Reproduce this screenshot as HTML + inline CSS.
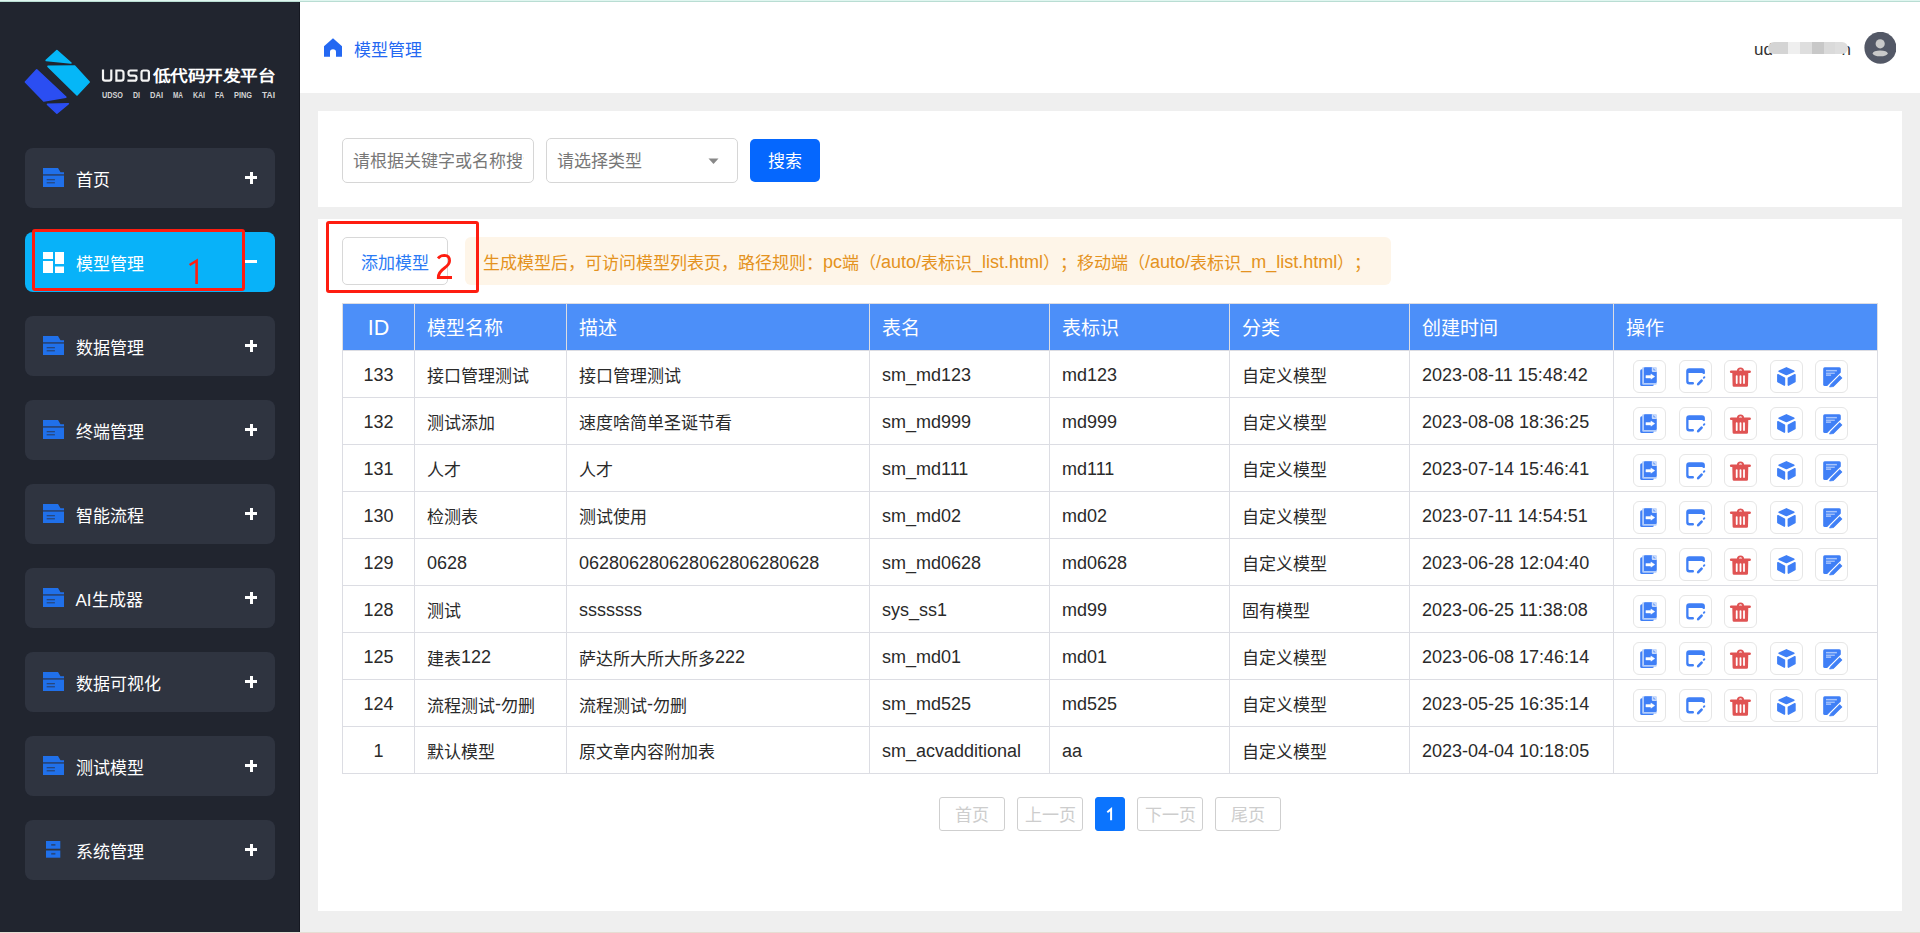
<!DOCTYPE html>
<html lang="zh-CN"><head><meta charset="utf-8">
<style>
*{box-sizing:border-box;margin:0;padding:0}
html,body{width:1920px;height:933px;overflow:hidden;background:#efefef;font-family:"Liberation Sans",sans-serif;position:relative;text-spacing-trim:space-all}
.abs{position:absolute}
#topline{left:0;top:0;width:1920px;height:2px;background:linear-gradient(#e0f6f0 0,#e0f6f0 1px,#b9ddd3 1px)}
#botline{left:0;top:932px;width:1920px;height:1px;background:#e6ddd3}
#side{left:0;top:2px;width:300px;height:930px;background:#21252f;border-right:1px solid #151821}
.mi{position:absolute;left:25px;width:250px;height:60px;border-radius:8px;background:#2f3440;color:#fff;font-size:17px}
.mi .t{position:absolute;left:50.5px;top:23px;line-height:20px;white-space:nowrap}
.mi .plus{position:absolute;left:220px;top:28px;width:12px;height:3px;background:#fff}
.mi .plus.v::after{content:"";position:absolute;left:4.5px;top:-4.5px;width:3px;height:12px;background:#fff}
.mi.act{background:#08b2f9}
.fold{position:absolute;left:18px;top:20px}
#header{left:300px;top:2px;width:1620px;height:91px;background:#fff}
.panel{position:absolute;background:#fff}
.inp{position:absolute;border:1px solid #d6d6d6;border-radius:5px;background:#fff;height:45px;font-size:17px;color:#777;white-space:nowrap;overflow:hidden}
table{border-collapse:collapse;position:absolute;left:342px;top:303px;table-layout:fixed;font-size:17px;color:#222}
td,th{border:1px solid #dcdde2;padding:0 0 0 13px;text-align:left;font-weight:normal;white-space:nowrap;overflow:hidden}
th{background:#4b8df8;color:#fff;height:47px;font-size:19px;border-color:#4b8df8;border-left-color:#d6e2f5;border-right-color:#d6e2f5}
td{height:47px}
td.c,th.c{text-align:center;padding:0}
.ops{position:relative}
.ib{position:absolute;width:33px;height:33px;border:1px solid #e6e6e6;border-radius:6px;background:#fff}
.ib svg{position:absolute;left:-1px;top:-1px}
.pg{position:absolute;top:797px;height:34px;border:1px solid #cfcfcf;border-radius:3px;color:#cdcdcd;font-size:17px;text-align:center;line-height:35px}
.red{position:absolute;border:3px solid #fe1d10;border-radius:3px}
.ann{position:absolute;color:#fe1d10;font-size:34px;line-height:34px}
</style></head>
<body>
<div id="topline" class="abs"></div>
<div id="side" class="abs"></div>
<svg class="abs" style="left:0;top:0" width="300" height="130" viewBox="0 0 300 130">
<g stroke-linejoin="round" stroke-width="1.6">
<path d="M56.9 50.6L46.2 60.4L71 63Z" fill="#05b7f7" stroke="#05b7f7"/>
<path d="M48 66.4L74.6 66L89.2 82L77 95Z" fill="#05b7f7" stroke="#05b7f7"/>
<path d="M36.7 69.9L25.4 82L43.8 101L65.8 97.2Z" fill="#2b4ef2" stroke="#2b4ef2"/>
<path d="M47.5 104.4L68.4 103.7L56.9 113.2Z" fill="#2b4ef2" stroke="#2b4ef2"/>
</g>
<g fill="none" stroke="#f4f4f4" stroke-width="2.2"><path d="M103 69.4V78.6Q103 80.7 105.1 80.7H109.2Q111.3 80.7 111.3 78.6V69.4"/><path d="M116.4 70.5H121Q123.5 70.5 123.5 73V78.2Q123.5 80.7 121 80.7H116.4Z"/><path d="M137.6 70.5H130.5Q128.5 70.5 128.5 72.5V73.6Q128.5 75.6 130.5 75.6H134.5Q136.5 75.6 136.5 77.6V78.7Q136.5 80.7 134.5 80.7H127.4"/><rect x="141.5" y="70.5" width="7.4" height="10.2" rx="2"/></g>
<text x="153" y="81.4" textLength="122" lengthAdjust="spacingAndGlyphs" font-family="Liberation Sans" font-weight="bold" font-size="15.2" fill="#fff">低代码开发平台</text>
<g font-family="Liberation Sans" font-weight="bold" font-size="8.2" fill="#d4d4d4">
<text x="102" y="97.6" textLength="21" lengthAdjust="spacingAndGlyphs">UDSO</text>
<text x="133" y="97.6" textLength="7" lengthAdjust="spacingAndGlyphs">DI</text>
<text x="150" y="97.6" textLength="13" lengthAdjust="spacingAndGlyphs">DAI</text>
<text x="173" y="97.6" textLength="10" lengthAdjust="spacingAndGlyphs">MA</text>
<text x="193" y="97.6" textLength="12" lengthAdjust="spacingAndGlyphs">KAI</text>
<text x="215" y="97.6" textLength="9" lengthAdjust="spacingAndGlyphs">FA</text>
<text x="234" y="97.6" textLength="18" lengthAdjust="spacingAndGlyphs">PING</text>
<text x="262" y="97.6" textLength="13" lengthAdjust="spacingAndGlyphs">TAI</text>
</g></svg>
<div class="mi" style="top:148px"><svg class="fold" width="21" height="19" viewBox="0 0 21 19"><path d="M0 0H15L17.5 4.3H21V19H0Z" fill="#2070ea"/><rect x="0" y="6" width="21" height="1.8" fill="#27477f"/><rect x="3.7" y="11" width="8.2" height="1.3" fill="#27477f"/><rect x="3.7" y="14.1" width="8.2" height="1.3" fill="#27477f"/></svg><div class="t">首页</div><div class="plus v"></div></div>
<div class="mi act" style="top:232px"><svg class="fold" style="top:20px" width="21" height="21" viewBox="0 0 21 21"><rect x="0" y="0" width="10" height="7" fill="#fff"/><rect x="0" y="9" width="10" height="12" fill="#fff"/><rect x="12" y="0" width="9" height="12" fill="#fff"/><rect x="12" y="14.5" width="9" height="6.5" fill="#fff"/></svg><div class="t">模型管理</div><div class="plus"></div></div>
<div class="mi" style="top:316px"><svg class="fold" width="21" height="19" viewBox="0 0 21 19"><path d="M0 0H15L17.5 4.3H21V19H0Z" fill="#2070ea"/><rect x="0" y="6" width="21" height="1.8" fill="#27477f"/><rect x="3.7" y="11" width="8.2" height="1.3" fill="#27477f"/><rect x="3.7" y="14.1" width="8.2" height="1.3" fill="#27477f"/></svg><div class="t">数据管理</div><div class="plus v"></div></div>
<div class="mi" style="top:400px"><svg class="fold" width="21" height="19" viewBox="0 0 21 19"><path d="M0 0H15L17.5 4.3H21V19H0Z" fill="#2070ea"/><rect x="0" y="6" width="21" height="1.8" fill="#27477f"/><rect x="3.7" y="11" width="8.2" height="1.3" fill="#27477f"/><rect x="3.7" y="14.1" width="8.2" height="1.3" fill="#27477f"/></svg><div class="t">终端管理</div><div class="plus v"></div></div>
<div class="mi" style="top:484px"><svg class="fold" width="21" height="19" viewBox="0 0 21 19"><path d="M0 0H15L17.5 4.3H21V19H0Z" fill="#2070ea"/><rect x="0" y="6" width="21" height="1.8" fill="#27477f"/><rect x="3.7" y="11" width="8.2" height="1.3" fill="#27477f"/><rect x="3.7" y="14.1" width="8.2" height="1.3" fill="#27477f"/></svg><div class="t">智能流程</div><div class="plus v"></div></div>
<div class="mi" style="top:568px"><svg class="fold" width="21" height="19" viewBox="0 0 21 19"><path d="M0 0H15L17.5 4.3H21V19H0Z" fill="#2070ea"/><rect x="0" y="6" width="21" height="1.8" fill="#27477f"/><rect x="3.7" y="11" width="8.2" height="1.3" fill="#27477f"/><rect x="3.7" y="14.1" width="8.2" height="1.3" fill="#27477f"/></svg><div class="t">AI生成器</div><div class="plus v"></div></div>
<div class="mi" style="top:652px"><svg class="fold" width="21" height="19" viewBox="0 0 21 19"><path d="M0 0H15L17.5 4.3H21V19H0Z" fill="#2070ea"/><rect x="0" y="6" width="21" height="1.8" fill="#27477f"/><rect x="3.7" y="11" width="8.2" height="1.3" fill="#27477f"/><rect x="3.7" y="14.1" width="8.2" height="1.3" fill="#27477f"/></svg><div class="t">数据可视化</div><div class="plus v"></div></div>
<div class="mi" style="top:736px"><svg class="fold" width="21" height="19" viewBox="0 0 21 19"><path d="M0 0H15L17.5 4.3H21V19H0Z" fill="#2070ea"/><rect x="0" y="6" width="21" height="1.8" fill="#27477f"/><rect x="3.7" y="11" width="8.2" height="1.3" fill="#27477f"/><rect x="3.7" y="14.1" width="8.2" height="1.3" fill="#27477f"/></svg><div class="t">测试模型</div><div class="plus v"></div></div>
<div class="mi" style="top:820px"><svg class="fold" style="left:21px;top:21.3px" width="15" height="17" viewBox="0 0 15 17"><rect x="0" y="0" width="14.3" height="7.7" fill="#2070ea"/><rect x="0" y="9.5" width="14.3" height="7.2" fill="#2070ea"/><rect x="5.2" y="3" width="4.2" height="1.7" fill="#27477f"/><rect x="5.2" y="11.9" width="4.2" height="1.7" fill="#27477f"/></svg><div class="t">系统管理</div><div class="plus v"></div></div>
<div id="header" class="abs"></div>
<div id="botline" class="abs"></div>









<!--MAIN-->
<svg class="abs" style="left:324px;top:38px" width="18" height="19" viewBox="0 0 18 19"><path d="M9 0.3L18 8.3V18.8H12V14Q12 11.2 9 11.2Q6 11.2 6 14V18.8H0V8.3Z" fill="#2468f2"/></svg>
<div class="abs" style="left:354px;top:40px;font-size:17px;line-height:22px;color:#2468f2">模型管理</div>
<div class="abs" style="left:1754px;top:39px;font-size:17px;line-height:22px;color:#333">ud</div>
<div class="abs" style="left:1839px;top:39px;font-size:17px;line-height:22px;color:#333;width:12px;overflow:hidden;text-align:right">n</div>
<div class="abs" style="left:1768px;top:42px;width:80px;height:12px;border-radius:6px;overflow:hidden;background:linear-gradient(90deg,#d4d4d4 0 20px,#efefef 20px 32px,#dedede 32px 44px,#c8c8c8 44px 56px,#dadada 56px 67px,#dedede 67px)"></div>
<svg class="abs" style="left:1864px;top:32px" width="32" height="32" viewBox="0 0 32 32"><circle cx="16.4" cy="15.8" r="16" fill="#535866"/><circle cx="16.2" cy="11.8" r="4.6" fill="#c9c9c9"/><ellipse cx="16.2" cy="21.4" rx="7.5" ry="2.9" fill="#c9c9c9"/></svg>

<div class="panel" style="left:318px;top:111px;width:1584px;height:96px"></div>
<div class="panel" style="left:318px;top:219px;width:1584px;height:692px"></div>
<div class="inp" style="left:342px;top:138px;width:192px"><div style="position:absolute;left:10px;top:12px;line-height:22px;width:171px;overflow:hidden">请根据关键字或名称搜索</div></div>
<div class="inp" style="left:546px;top:138px;width:192px"><div style="position:absolute;left:10px;top:12px;line-height:22px">请选择类型</div><svg style="position:absolute;left:161px;top:19px" width="12" height="7" viewBox="0 0 12 7"><path d="M0.5 0.5H10.5L5.5 6Z" fill="#888"/></svg></div>
<div class="abs" style="left:750px;top:139px;width:70px;height:43px;background:#0567fe;border-radius:5px;color:#fff;font-size:17px;line-height:45px;text-align:center">搜索</div>
<div class="abs" style="left:342px;top:237px;width:106px;height:48px;border:1px solid #d8d8d8;border-radius:5px;background:#fff;color:#2a7bf5;font-size:17px;line-height:52px;padding-left:18px">添加模型</div>
<div class="abs" style="left:465px;top:237px;width:926px;height:48px;background:#fef5e8;border-radius:6px;color:#e49220;font-size:17px;line-height:52px;padding-left:18px;white-space:nowrap">生成模型后，可访问模型列表页，路径规则：<span style="font-size:18px;position:relative;top:-1px">pc</span>端（<span style="font-size:18px;position:relative;top:-1px">/auto/</span>表标识<span style="font-size:18px;position:relative;top:-1px">_list.html</span>）；移动端（<span style="font-size:18px;position:relative;top:-1px">/auto/</span>表标识<span style="font-size:18px;position:relative;top:-1px">_m_list.html</span>）；</div>
<div class="abs" style="left:342px;top:303px;width:1536px;height:471px;background:#fff"></div>
<div class="abs" style="left:343px;top:304px;width:1534px;height:46px;background:#4c8ff9"></div>
<div class="abs" style="left:342px;top:303px;width:1px;height:471px;background:#dcdde3"></div>
<div class="abs" style="left:414px;top:303px;width:1px;height:471px;background:#dcdde3"></div>
<div class="abs" style="left:566px;top:303px;width:1px;height:471px;background:#dcdde3"></div>
<div class="abs" style="left:869px;top:303px;width:1px;height:471px;background:#dcdde3"></div>
<div class="abs" style="left:1049px;top:303px;width:1px;height:471px;background:#dcdde3"></div>
<div class="abs" style="left:1229px;top:303px;width:1px;height:471px;background:#dcdde3"></div>
<div class="abs" style="left:1409px;top:303px;width:1px;height:471px;background:#dcdde3"></div>
<div class="abs" style="left:1613px;top:303px;width:1px;height:471px;background:#dcdde3"></div>
<div class="abs" style="left:1877px;top:303px;width:1px;height:471px;background:#dcdde3"></div>
<div class="abs" style="left:342px;top:303px;width:1536px;height:1px;background:#dcdde3"></div>
<div class="abs" style="left:342px;top:350px;width:1536px;height:1px;background:#dcdde3"></div>
<div class="abs" style="left:342px;top:397px;width:1536px;height:1px;background:#dcdde3"></div>
<div class="abs" style="left:342px;top:444px;width:1536px;height:1px;background:#dcdde3"></div>
<div class="abs" style="left:342px;top:491px;width:1536px;height:1px;background:#dcdde3"></div>
<div class="abs" style="left:342px;top:538px;width:1536px;height:1px;background:#dcdde3"></div>
<div class="abs" style="left:342px;top:585px;width:1536px;height:1px;background:#dcdde3"></div>
<div class="abs" style="left:342px;top:632px;width:1536px;height:1px;background:#dcdde3"></div>
<div class="abs" style="left:342px;top:679px;width:1536px;height:1px;background:#dcdde3"></div>
<div class="abs" style="left:342px;top:726px;width:1536px;height:1px;background:#dcdde3"></div>
<div class="abs" style="left:342px;top:773px;width:1536px;height:1px;background:#dcdde3"></div>
<div class="abs th" style="left:342px;top:306px;width:73px;height:46px;line-height:46px;text-align:center;font-size:19px;color:#fff;white-space:nowrap"><span style="font-size:21.5px;position:relative;top:-1px">ID</span></div>
<div class="abs th" style="left:427px;top:306px;height:46px;line-height:46px;font-size:19px;color:#fff;white-space:nowrap">模型名称</div>
<div class="abs th" style="left:579px;top:306px;height:46px;line-height:46px;font-size:19px;color:#fff;white-space:nowrap">描述</div>
<div class="abs th" style="left:882px;top:306px;height:46px;line-height:46px;font-size:19px;color:#fff;white-space:nowrap">表名</div>
<div class="abs th" style="left:1062px;top:306px;height:46px;line-height:46px;font-size:19px;color:#fff;white-space:nowrap">表标识</div>
<div class="abs th" style="left:1242px;top:306px;height:46px;line-height:46px;font-size:19px;color:#fff;white-space:nowrap">分类</div>
<div class="abs th" style="left:1422px;top:306px;height:46px;line-height:46px;font-size:19px;color:#fff;white-space:nowrap">创建时间</div>
<div class="abs th" style="left:1626px;top:306px;height:46px;line-height:46px;font-size:19px;color:#fff;white-space:nowrap">操作</div>
<div class="abs td" style="left:342px;top:354px;width:73px;height:46px;line-height:46px;text-align:center;font-size:17px;color:#2a2a2a;white-space:nowrap"><span style="font-size:18px;position:relative;top:-2px">133</span></div>
<div class="abs td" style="left:427px;top:354px;height:46px;line-height:46px;font-size:17px;color:#2a2a2a;white-space:nowrap">接口管理测试</div>
<div class="abs td" style="left:579px;top:354px;height:46px;line-height:46px;font-size:17px;color:#2a2a2a;white-space:nowrap">接口管理测试</div>
<div class="abs td" style="left:882px;top:354px;height:46px;line-height:46px;font-size:17px;color:#2a2a2a;white-space:nowrap"><span style="font-size:18px;position:relative;top:-2px">sm_md123</span></div>
<div class="abs td" style="left:1062px;top:354px;height:46px;line-height:46px;font-size:17px;color:#2a2a2a;white-space:nowrap"><span style="font-size:18px;position:relative;top:-2px">md123</span></div>
<div class="abs td" style="left:1242px;top:354px;height:46px;line-height:46px;font-size:17px;color:#2a2a2a;white-space:nowrap">自定义模型</div>
<div class="abs td" style="left:1422px;top:354px;height:46px;line-height:46px;font-size:17px;color:#2a2a2a;white-space:nowrap"><span style="font-size:18px;position:relative;top:-2px">2023-08-11 15:48:42</span></div>
<div class="ib" style="left:1633px;top:360px"><svg width="32" height="32" viewBox="0 0 32 32"><rect x="7.2" y="9.2" width="13.6" height="16.7" rx="1.5" fill="#3f7ff6"/><rect x="9.2" y="7.2" width="14.5" height="17.5" rx="1" fill="#b3cdfb"/><path d="M12 7.2H18.8L23.7 12V21.8Q23.7 23 22.5 23H11V8.2Q11 7.2 12 7.2Z" fill="#3f7ff6"/><path d="M18.8 7.2H22.7Q23.7 7.2 23.7 8.2V12H19.8Q18.8 12 18.8 11Z" fill="#c9dbfc"/><path d="M20.2 8L22.9 10.6H21.2Q20.2 10.6 20.2 9.6Z" fill="#6f9ff8"/><path d="M12.9 15.5H17.9V14L21.8 16.6L17.9 19.2V18H12.9Z" fill="#fff" stroke="#fff" stroke-width=".4" stroke-linejoin="round"/></svg></div>
<div class="ib" style="left:1679px;top:360px"><svg width="32" height="32" viewBox="0 0 32 32"><path d="M10.2 8.2H22.9Q25.9 8.2 25.9 11.2V13.3Q25.9 14 25.2 14H24.4Q23.6 13 22.6 13H9.5V21Q9.5 22.1 10.6 22.1H13.8Q15 22.1 15 23.35Q15 24.6 13.8 24.6H10.2Q7.2 24.6 7.2 21.6V11.2Q7.2 8.2 10.2 8.2Z" fill="#3f7ff6"/><path d="M19.2 24.2L22.6 20.6" stroke="#3f7ff6" stroke-width="2.6" stroke-linecap="round"/><path d="M24.8 17.8L25.4 17.2" stroke="#3f7ff6" stroke-width="1.9" stroke-linecap="round"/></svg></div>
<div class="ib" style="left:1724px;top:360px"><svg width="32" height="32" viewBox="0 0 32 32"><g transform="translate(0.3 0.4)"><path d="M12.6 10.6A3.6 3.6 0 0 1 19.8 10.6H17.9A1.7 1.7 0 0 0 14.5 10.6Z" fill="#e05353"/><rect x="5.6" y="10.2" width="21" height="2.5" rx="1.25" fill="#e05353"/><path d="M8 12.5H24L23.7 25Q23.7 26.4 22.3 26.4H9.7Q8.3 26.4 8.3 25Z" fill="#e05353"/><g fill="#fff"><rect x="11.5" y="14.8" width="1.8" height="8.7" rx=".9"/><rect x="15.3" y="14.8" width="1.8" height="8.7" rx=".9"/><rect x="18.8" y="14.8" width="1.8" height="8.7" rx=".9"/></g></g></svg></div>
<div class="ib" style="left:1770px;top:360px"><svg width="32" height="32" viewBox="0 0 32 32"><g transform="translate(0.3 0.4)" fill="#3f7ff6" stroke="#3f7ff6" stroke-width="1.6" stroke-linejoin="round"><path d="M16.1 7.5L8.9 10.9L16.1 14.1L23.5 10.9Z"/><path d="M7.6 14.4L14.1 17.7V24.7L7.6 21.2Z"/><path d="M24.6 14.4L18.1 17.7V24.7L24.6 21.2Z"/></g></svg></div>
<div class="ib" style="left:1815px;top:360px"><svg width="32" height="32" viewBox="0 0 32 32"><path d="M9.7 7.3H24.3Q25.8 7.3 25.8 8.8V12.5L12.2 26.1H9.7Q8.2 26.1 8.2 24.6V8.8Q8.2 7.3 9.7 7.3Z" fill="#3f7ff6"/><path d="M24.7 15.6L27.1 18L18.6 26.5L14.5 27L15.8 24.5Z" fill="#3f7ff6" stroke="#3f7ff6" stroke-width=".7" stroke-linejoin="round"/><g fill="#a9c5fb"><rect x="11" y="9.9" width="10.9" height="1.5"/><rect x="11" y="12.6" width="8.8" height="1.3"/><rect x="11" y="14.4" width="5.1" height="1.5"/></g></svg></div>
<div class="abs td" style="left:342px;top:401px;width:73px;height:46px;line-height:46px;text-align:center;font-size:17px;color:#2a2a2a;white-space:nowrap"><span style="font-size:18px;position:relative;top:-2px">132</span></div>
<div class="abs td" style="left:427px;top:401px;height:46px;line-height:46px;font-size:17px;color:#2a2a2a;white-space:nowrap">测试添加</div>
<div class="abs td" style="left:579px;top:401px;height:46px;line-height:46px;font-size:17px;color:#2a2a2a;white-space:nowrap">速度啥简单圣诞节看</div>
<div class="abs td" style="left:882px;top:401px;height:46px;line-height:46px;font-size:17px;color:#2a2a2a;white-space:nowrap"><span style="font-size:18px;position:relative;top:-2px">sm_md999</span></div>
<div class="abs td" style="left:1062px;top:401px;height:46px;line-height:46px;font-size:17px;color:#2a2a2a;white-space:nowrap"><span style="font-size:18px;position:relative;top:-2px">md999</span></div>
<div class="abs td" style="left:1242px;top:401px;height:46px;line-height:46px;font-size:17px;color:#2a2a2a;white-space:nowrap">自定义模型</div>
<div class="abs td" style="left:1422px;top:401px;height:46px;line-height:46px;font-size:17px;color:#2a2a2a;white-space:nowrap"><span style="font-size:18px;position:relative;top:-2px">2023-08-08 18:36:25</span></div>
<div class="ib" style="left:1633px;top:407px"><svg width="32" height="32" viewBox="0 0 32 32"><rect x="7.2" y="9.2" width="13.6" height="16.7" rx="1.5" fill="#3f7ff6"/><rect x="9.2" y="7.2" width="14.5" height="17.5" rx="1" fill="#b3cdfb"/><path d="M12 7.2H18.8L23.7 12V21.8Q23.7 23 22.5 23H11V8.2Q11 7.2 12 7.2Z" fill="#3f7ff6"/><path d="M18.8 7.2H22.7Q23.7 7.2 23.7 8.2V12H19.8Q18.8 12 18.8 11Z" fill="#c9dbfc"/><path d="M20.2 8L22.9 10.6H21.2Q20.2 10.6 20.2 9.6Z" fill="#6f9ff8"/><path d="M12.9 15.5H17.9V14L21.8 16.6L17.9 19.2V18H12.9Z" fill="#fff" stroke="#fff" stroke-width=".4" stroke-linejoin="round"/></svg></div>
<div class="ib" style="left:1679px;top:407px"><svg width="32" height="32" viewBox="0 0 32 32"><path d="M10.2 8.2H22.9Q25.9 8.2 25.9 11.2V13.3Q25.9 14 25.2 14H24.4Q23.6 13 22.6 13H9.5V21Q9.5 22.1 10.6 22.1H13.8Q15 22.1 15 23.35Q15 24.6 13.8 24.6H10.2Q7.2 24.6 7.2 21.6V11.2Q7.2 8.2 10.2 8.2Z" fill="#3f7ff6"/><path d="M19.2 24.2L22.6 20.6" stroke="#3f7ff6" stroke-width="2.6" stroke-linecap="round"/><path d="M24.8 17.8L25.4 17.2" stroke="#3f7ff6" stroke-width="1.9" stroke-linecap="round"/></svg></div>
<div class="ib" style="left:1724px;top:407px"><svg width="32" height="32" viewBox="0 0 32 32"><g transform="translate(0.3 0.4)"><path d="M12.6 10.6A3.6 3.6 0 0 1 19.8 10.6H17.9A1.7 1.7 0 0 0 14.5 10.6Z" fill="#e05353"/><rect x="5.6" y="10.2" width="21" height="2.5" rx="1.25" fill="#e05353"/><path d="M8 12.5H24L23.7 25Q23.7 26.4 22.3 26.4H9.7Q8.3 26.4 8.3 25Z" fill="#e05353"/><g fill="#fff"><rect x="11.5" y="14.8" width="1.8" height="8.7" rx=".9"/><rect x="15.3" y="14.8" width="1.8" height="8.7" rx=".9"/><rect x="18.8" y="14.8" width="1.8" height="8.7" rx=".9"/></g></g></svg></div>
<div class="ib" style="left:1770px;top:407px"><svg width="32" height="32" viewBox="0 0 32 32"><g transform="translate(0.3 0.4)" fill="#3f7ff6" stroke="#3f7ff6" stroke-width="1.6" stroke-linejoin="round"><path d="M16.1 7.5L8.9 10.9L16.1 14.1L23.5 10.9Z"/><path d="M7.6 14.4L14.1 17.7V24.7L7.6 21.2Z"/><path d="M24.6 14.4L18.1 17.7V24.7L24.6 21.2Z"/></g></svg></div>
<div class="ib" style="left:1815px;top:407px"><svg width="32" height="32" viewBox="0 0 32 32"><path d="M9.7 7.3H24.3Q25.8 7.3 25.8 8.8V12.5L12.2 26.1H9.7Q8.2 26.1 8.2 24.6V8.8Q8.2 7.3 9.7 7.3Z" fill="#3f7ff6"/><path d="M24.7 15.6L27.1 18L18.6 26.5L14.5 27L15.8 24.5Z" fill="#3f7ff6" stroke="#3f7ff6" stroke-width=".7" stroke-linejoin="round"/><g fill="#a9c5fb"><rect x="11" y="9.9" width="10.9" height="1.5"/><rect x="11" y="12.6" width="8.8" height="1.3"/><rect x="11" y="14.4" width="5.1" height="1.5"/></g></svg></div>
<div class="abs td" style="left:342px;top:448px;width:73px;height:46px;line-height:46px;text-align:center;font-size:17px;color:#2a2a2a;white-space:nowrap"><span style="font-size:18px;position:relative;top:-2px">131</span></div>
<div class="abs td" style="left:427px;top:448px;height:46px;line-height:46px;font-size:17px;color:#2a2a2a;white-space:nowrap">人才</div>
<div class="abs td" style="left:579px;top:448px;height:46px;line-height:46px;font-size:17px;color:#2a2a2a;white-space:nowrap">人才</div>
<div class="abs td" style="left:882px;top:448px;height:46px;line-height:46px;font-size:17px;color:#2a2a2a;white-space:nowrap"><span style="font-size:18px;position:relative;top:-2px">sm_md111</span></div>
<div class="abs td" style="left:1062px;top:448px;height:46px;line-height:46px;font-size:17px;color:#2a2a2a;white-space:nowrap"><span style="font-size:18px;position:relative;top:-2px">md111</span></div>
<div class="abs td" style="left:1242px;top:448px;height:46px;line-height:46px;font-size:17px;color:#2a2a2a;white-space:nowrap">自定义模型</div>
<div class="abs td" style="left:1422px;top:448px;height:46px;line-height:46px;font-size:17px;color:#2a2a2a;white-space:nowrap"><span style="font-size:18px;position:relative;top:-2px">2023-07-14 15:46:41</span></div>
<div class="ib" style="left:1633px;top:454px"><svg width="32" height="32" viewBox="0 0 32 32"><rect x="7.2" y="9.2" width="13.6" height="16.7" rx="1.5" fill="#3f7ff6"/><rect x="9.2" y="7.2" width="14.5" height="17.5" rx="1" fill="#b3cdfb"/><path d="M12 7.2H18.8L23.7 12V21.8Q23.7 23 22.5 23H11V8.2Q11 7.2 12 7.2Z" fill="#3f7ff6"/><path d="M18.8 7.2H22.7Q23.7 7.2 23.7 8.2V12H19.8Q18.8 12 18.8 11Z" fill="#c9dbfc"/><path d="M20.2 8L22.9 10.6H21.2Q20.2 10.6 20.2 9.6Z" fill="#6f9ff8"/><path d="M12.9 15.5H17.9V14L21.8 16.6L17.9 19.2V18H12.9Z" fill="#fff" stroke="#fff" stroke-width=".4" stroke-linejoin="round"/></svg></div>
<div class="ib" style="left:1679px;top:454px"><svg width="32" height="32" viewBox="0 0 32 32"><path d="M10.2 8.2H22.9Q25.9 8.2 25.9 11.2V13.3Q25.9 14 25.2 14H24.4Q23.6 13 22.6 13H9.5V21Q9.5 22.1 10.6 22.1H13.8Q15 22.1 15 23.35Q15 24.6 13.8 24.6H10.2Q7.2 24.6 7.2 21.6V11.2Q7.2 8.2 10.2 8.2Z" fill="#3f7ff6"/><path d="M19.2 24.2L22.6 20.6" stroke="#3f7ff6" stroke-width="2.6" stroke-linecap="round"/><path d="M24.8 17.8L25.4 17.2" stroke="#3f7ff6" stroke-width="1.9" stroke-linecap="round"/></svg></div>
<div class="ib" style="left:1724px;top:454px"><svg width="32" height="32" viewBox="0 0 32 32"><g transform="translate(0.3 0.4)"><path d="M12.6 10.6A3.6 3.6 0 0 1 19.8 10.6H17.9A1.7 1.7 0 0 0 14.5 10.6Z" fill="#e05353"/><rect x="5.6" y="10.2" width="21" height="2.5" rx="1.25" fill="#e05353"/><path d="M8 12.5H24L23.7 25Q23.7 26.4 22.3 26.4H9.7Q8.3 26.4 8.3 25Z" fill="#e05353"/><g fill="#fff"><rect x="11.5" y="14.8" width="1.8" height="8.7" rx=".9"/><rect x="15.3" y="14.8" width="1.8" height="8.7" rx=".9"/><rect x="18.8" y="14.8" width="1.8" height="8.7" rx=".9"/></g></g></svg></div>
<div class="ib" style="left:1770px;top:454px"><svg width="32" height="32" viewBox="0 0 32 32"><g transform="translate(0.3 0.4)" fill="#3f7ff6" stroke="#3f7ff6" stroke-width="1.6" stroke-linejoin="round"><path d="M16.1 7.5L8.9 10.9L16.1 14.1L23.5 10.9Z"/><path d="M7.6 14.4L14.1 17.7V24.7L7.6 21.2Z"/><path d="M24.6 14.4L18.1 17.7V24.7L24.6 21.2Z"/></g></svg></div>
<div class="ib" style="left:1815px;top:454px"><svg width="32" height="32" viewBox="0 0 32 32"><path d="M9.7 7.3H24.3Q25.8 7.3 25.8 8.8V12.5L12.2 26.1H9.7Q8.2 26.1 8.2 24.6V8.8Q8.2 7.3 9.7 7.3Z" fill="#3f7ff6"/><path d="M24.7 15.6L27.1 18L18.6 26.5L14.5 27L15.8 24.5Z" fill="#3f7ff6" stroke="#3f7ff6" stroke-width=".7" stroke-linejoin="round"/><g fill="#a9c5fb"><rect x="11" y="9.9" width="10.9" height="1.5"/><rect x="11" y="12.6" width="8.8" height="1.3"/><rect x="11" y="14.4" width="5.1" height="1.5"/></g></svg></div>
<div class="abs td" style="left:342px;top:495px;width:73px;height:46px;line-height:46px;text-align:center;font-size:17px;color:#2a2a2a;white-space:nowrap"><span style="font-size:18px;position:relative;top:-2px">130</span></div>
<div class="abs td" style="left:427px;top:495px;height:46px;line-height:46px;font-size:17px;color:#2a2a2a;white-space:nowrap">检测表</div>
<div class="abs td" style="left:579px;top:495px;height:46px;line-height:46px;font-size:17px;color:#2a2a2a;white-space:nowrap">测试使用</div>
<div class="abs td" style="left:882px;top:495px;height:46px;line-height:46px;font-size:17px;color:#2a2a2a;white-space:nowrap"><span style="font-size:18px;position:relative;top:-2px">sm_md02</span></div>
<div class="abs td" style="left:1062px;top:495px;height:46px;line-height:46px;font-size:17px;color:#2a2a2a;white-space:nowrap"><span style="font-size:18px;position:relative;top:-2px">md02</span></div>
<div class="abs td" style="left:1242px;top:495px;height:46px;line-height:46px;font-size:17px;color:#2a2a2a;white-space:nowrap">自定义模型</div>
<div class="abs td" style="left:1422px;top:495px;height:46px;line-height:46px;font-size:17px;color:#2a2a2a;white-space:nowrap"><span style="font-size:18px;position:relative;top:-2px">2023-07-11 14:54:51</span></div>
<div class="ib" style="left:1633px;top:501px"><svg width="32" height="32" viewBox="0 0 32 32"><rect x="7.2" y="9.2" width="13.6" height="16.7" rx="1.5" fill="#3f7ff6"/><rect x="9.2" y="7.2" width="14.5" height="17.5" rx="1" fill="#b3cdfb"/><path d="M12 7.2H18.8L23.7 12V21.8Q23.7 23 22.5 23H11V8.2Q11 7.2 12 7.2Z" fill="#3f7ff6"/><path d="M18.8 7.2H22.7Q23.7 7.2 23.7 8.2V12H19.8Q18.8 12 18.8 11Z" fill="#c9dbfc"/><path d="M20.2 8L22.9 10.6H21.2Q20.2 10.6 20.2 9.6Z" fill="#6f9ff8"/><path d="M12.9 15.5H17.9V14L21.8 16.6L17.9 19.2V18H12.9Z" fill="#fff" stroke="#fff" stroke-width=".4" stroke-linejoin="round"/></svg></div>
<div class="ib" style="left:1679px;top:501px"><svg width="32" height="32" viewBox="0 0 32 32"><path d="M10.2 8.2H22.9Q25.9 8.2 25.9 11.2V13.3Q25.9 14 25.2 14H24.4Q23.6 13 22.6 13H9.5V21Q9.5 22.1 10.6 22.1H13.8Q15 22.1 15 23.35Q15 24.6 13.8 24.6H10.2Q7.2 24.6 7.2 21.6V11.2Q7.2 8.2 10.2 8.2Z" fill="#3f7ff6"/><path d="M19.2 24.2L22.6 20.6" stroke="#3f7ff6" stroke-width="2.6" stroke-linecap="round"/><path d="M24.8 17.8L25.4 17.2" stroke="#3f7ff6" stroke-width="1.9" stroke-linecap="round"/></svg></div>
<div class="ib" style="left:1724px;top:501px"><svg width="32" height="32" viewBox="0 0 32 32"><g transform="translate(0.3 0.4)"><path d="M12.6 10.6A3.6 3.6 0 0 1 19.8 10.6H17.9A1.7 1.7 0 0 0 14.5 10.6Z" fill="#e05353"/><rect x="5.6" y="10.2" width="21" height="2.5" rx="1.25" fill="#e05353"/><path d="M8 12.5H24L23.7 25Q23.7 26.4 22.3 26.4H9.7Q8.3 26.4 8.3 25Z" fill="#e05353"/><g fill="#fff"><rect x="11.5" y="14.8" width="1.8" height="8.7" rx=".9"/><rect x="15.3" y="14.8" width="1.8" height="8.7" rx=".9"/><rect x="18.8" y="14.8" width="1.8" height="8.7" rx=".9"/></g></g></svg></div>
<div class="ib" style="left:1770px;top:501px"><svg width="32" height="32" viewBox="0 0 32 32"><g transform="translate(0.3 0.4)" fill="#3f7ff6" stroke="#3f7ff6" stroke-width="1.6" stroke-linejoin="round"><path d="M16.1 7.5L8.9 10.9L16.1 14.1L23.5 10.9Z"/><path d="M7.6 14.4L14.1 17.7V24.7L7.6 21.2Z"/><path d="M24.6 14.4L18.1 17.7V24.7L24.6 21.2Z"/></g></svg></div>
<div class="ib" style="left:1815px;top:501px"><svg width="32" height="32" viewBox="0 0 32 32"><path d="M9.7 7.3H24.3Q25.8 7.3 25.8 8.8V12.5L12.2 26.1H9.7Q8.2 26.1 8.2 24.6V8.8Q8.2 7.3 9.7 7.3Z" fill="#3f7ff6"/><path d="M24.7 15.6L27.1 18L18.6 26.5L14.5 27L15.8 24.5Z" fill="#3f7ff6" stroke="#3f7ff6" stroke-width=".7" stroke-linejoin="round"/><g fill="#a9c5fb"><rect x="11" y="9.9" width="10.9" height="1.5"/><rect x="11" y="12.6" width="8.8" height="1.3"/><rect x="11" y="14.4" width="5.1" height="1.5"/></g></svg></div>
<div class="abs td" style="left:342px;top:542px;width:73px;height:46px;line-height:46px;text-align:center;font-size:17px;color:#2a2a2a;white-space:nowrap"><span style="font-size:18px;position:relative;top:-2px">129</span></div>
<div class="abs td" style="left:427px;top:542px;height:46px;line-height:46px;font-size:17px;color:#2a2a2a;white-space:nowrap"><span style="font-size:18px;position:relative;top:-2px">0628</span></div>
<div class="abs td" style="left:579px;top:542px;height:46px;line-height:46px;font-size:17px;color:#2a2a2a;white-space:nowrap"><span style="font-size:18px;position:relative;top:-2px">062806280628062806280628</span></div>
<div class="abs td" style="left:882px;top:542px;height:46px;line-height:46px;font-size:17px;color:#2a2a2a;white-space:nowrap"><span style="font-size:18px;position:relative;top:-2px">sm_md0628</span></div>
<div class="abs td" style="left:1062px;top:542px;height:46px;line-height:46px;font-size:17px;color:#2a2a2a;white-space:nowrap"><span style="font-size:18px;position:relative;top:-2px">md0628</span></div>
<div class="abs td" style="left:1242px;top:542px;height:46px;line-height:46px;font-size:17px;color:#2a2a2a;white-space:nowrap">自定义模型</div>
<div class="abs td" style="left:1422px;top:542px;height:46px;line-height:46px;font-size:17px;color:#2a2a2a;white-space:nowrap"><span style="font-size:18px;position:relative;top:-2px">2023-06-28 12:04:40</span></div>
<div class="ib" style="left:1633px;top:548px"><svg width="32" height="32" viewBox="0 0 32 32"><rect x="7.2" y="9.2" width="13.6" height="16.7" rx="1.5" fill="#3f7ff6"/><rect x="9.2" y="7.2" width="14.5" height="17.5" rx="1" fill="#b3cdfb"/><path d="M12 7.2H18.8L23.7 12V21.8Q23.7 23 22.5 23H11V8.2Q11 7.2 12 7.2Z" fill="#3f7ff6"/><path d="M18.8 7.2H22.7Q23.7 7.2 23.7 8.2V12H19.8Q18.8 12 18.8 11Z" fill="#c9dbfc"/><path d="M20.2 8L22.9 10.6H21.2Q20.2 10.6 20.2 9.6Z" fill="#6f9ff8"/><path d="M12.9 15.5H17.9V14L21.8 16.6L17.9 19.2V18H12.9Z" fill="#fff" stroke="#fff" stroke-width=".4" stroke-linejoin="round"/></svg></div>
<div class="ib" style="left:1679px;top:548px"><svg width="32" height="32" viewBox="0 0 32 32"><path d="M10.2 8.2H22.9Q25.9 8.2 25.9 11.2V13.3Q25.9 14 25.2 14H24.4Q23.6 13 22.6 13H9.5V21Q9.5 22.1 10.6 22.1H13.8Q15 22.1 15 23.35Q15 24.6 13.8 24.6H10.2Q7.2 24.6 7.2 21.6V11.2Q7.2 8.2 10.2 8.2Z" fill="#3f7ff6"/><path d="M19.2 24.2L22.6 20.6" stroke="#3f7ff6" stroke-width="2.6" stroke-linecap="round"/><path d="M24.8 17.8L25.4 17.2" stroke="#3f7ff6" stroke-width="1.9" stroke-linecap="round"/></svg></div>
<div class="ib" style="left:1724px;top:548px"><svg width="32" height="32" viewBox="0 0 32 32"><g transform="translate(0.3 0.4)"><path d="M12.6 10.6A3.6 3.6 0 0 1 19.8 10.6H17.9A1.7 1.7 0 0 0 14.5 10.6Z" fill="#e05353"/><rect x="5.6" y="10.2" width="21" height="2.5" rx="1.25" fill="#e05353"/><path d="M8 12.5H24L23.7 25Q23.7 26.4 22.3 26.4H9.7Q8.3 26.4 8.3 25Z" fill="#e05353"/><g fill="#fff"><rect x="11.5" y="14.8" width="1.8" height="8.7" rx=".9"/><rect x="15.3" y="14.8" width="1.8" height="8.7" rx=".9"/><rect x="18.8" y="14.8" width="1.8" height="8.7" rx=".9"/></g></g></svg></div>
<div class="ib" style="left:1770px;top:548px"><svg width="32" height="32" viewBox="0 0 32 32"><g transform="translate(0.3 0.4)" fill="#3f7ff6" stroke="#3f7ff6" stroke-width="1.6" stroke-linejoin="round"><path d="M16.1 7.5L8.9 10.9L16.1 14.1L23.5 10.9Z"/><path d="M7.6 14.4L14.1 17.7V24.7L7.6 21.2Z"/><path d="M24.6 14.4L18.1 17.7V24.7L24.6 21.2Z"/></g></svg></div>
<div class="ib" style="left:1815px;top:548px"><svg width="32" height="32" viewBox="0 0 32 32"><path d="M9.7 7.3H24.3Q25.8 7.3 25.8 8.8V12.5L12.2 26.1H9.7Q8.2 26.1 8.2 24.6V8.8Q8.2 7.3 9.7 7.3Z" fill="#3f7ff6"/><path d="M24.7 15.6L27.1 18L18.6 26.5L14.5 27L15.8 24.5Z" fill="#3f7ff6" stroke="#3f7ff6" stroke-width=".7" stroke-linejoin="round"/><g fill="#a9c5fb"><rect x="11" y="9.9" width="10.9" height="1.5"/><rect x="11" y="12.6" width="8.8" height="1.3"/><rect x="11" y="14.4" width="5.1" height="1.5"/></g></svg></div>
<div class="abs td" style="left:342px;top:589px;width:73px;height:46px;line-height:46px;text-align:center;font-size:17px;color:#2a2a2a;white-space:nowrap"><span style="font-size:18px;position:relative;top:-2px">128</span></div>
<div class="abs td" style="left:427px;top:589px;height:46px;line-height:46px;font-size:17px;color:#2a2a2a;white-space:nowrap">测试</div>
<div class="abs td" style="left:579px;top:589px;height:46px;line-height:46px;font-size:17px;color:#2a2a2a;white-space:nowrap"><span style="font-size:18px;position:relative;top:-2px">sssssss</span></div>
<div class="abs td" style="left:882px;top:589px;height:46px;line-height:46px;font-size:17px;color:#2a2a2a;white-space:nowrap"><span style="font-size:18px;position:relative;top:-2px">sys_ss1</span></div>
<div class="abs td" style="left:1062px;top:589px;height:46px;line-height:46px;font-size:17px;color:#2a2a2a;white-space:nowrap"><span style="font-size:18px;position:relative;top:-2px">md99</span></div>
<div class="abs td" style="left:1242px;top:589px;height:46px;line-height:46px;font-size:17px;color:#2a2a2a;white-space:nowrap">固有模型</div>
<div class="abs td" style="left:1422px;top:589px;height:46px;line-height:46px;font-size:17px;color:#2a2a2a;white-space:nowrap"><span style="font-size:18px;position:relative;top:-2px">2023-06-25 11:38:08</span></div>
<div class="ib" style="left:1633px;top:595px"><svg width="32" height="32" viewBox="0 0 32 32"><rect x="7.2" y="9.2" width="13.6" height="16.7" rx="1.5" fill="#3f7ff6"/><rect x="9.2" y="7.2" width="14.5" height="17.5" rx="1" fill="#b3cdfb"/><path d="M12 7.2H18.8L23.7 12V21.8Q23.7 23 22.5 23H11V8.2Q11 7.2 12 7.2Z" fill="#3f7ff6"/><path d="M18.8 7.2H22.7Q23.7 7.2 23.7 8.2V12H19.8Q18.8 12 18.8 11Z" fill="#c9dbfc"/><path d="M20.2 8L22.9 10.6H21.2Q20.2 10.6 20.2 9.6Z" fill="#6f9ff8"/><path d="M12.9 15.5H17.9V14L21.8 16.6L17.9 19.2V18H12.9Z" fill="#fff" stroke="#fff" stroke-width=".4" stroke-linejoin="round"/></svg></div>
<div class="ib" style="left:1679px;top:595px"><svg width="32" height="32" viewBox="0 0 32 32"><path d="M10.2 8.2H22.9Q25.9 8.2 25.9 11.2V13.3Q25.9 14 25.2 14H24.4Q23.6 13 22.6 13H9.5V21Q9.5 22.1 10.6 22.1H13.8Q15 22.1 15 23.35Q15 24.6 13.8 24.6H10.2Q7.2 24.6 7.2 21.6V11.2Q7.2 8.2 10.2 8.2Z" fill="#3f7ff6"/><path d="M19.2 24.2L22.6 20.6" stroke="#3f7ff6" stroke-width="2.6" stroke-linecap="round"/><path d="M24.8 17.8L25.4 17.2" stroke="#3f7ff6" stroke-width="1.9" stroke-linecap="round"/></svg></div>
<div class="ib" style="left:1724px;top:595px"><svg width="32" height="32" viewBox="0 0 32 32"><g transform="translate(0.3 0.4)"><path d="M12.6 10.6A3.6 3.6 0 0 1 19.8 10.6H17.9A1.7 1.7 0 0 0 14.5 10.6Z" fill="#e05353"/><rect x="5.6" y="10.2" width="21" height="2.5" rx="1.25" fill="#e05353"/><path d="M8 12.5H24L23.7 25Q23.7 26.4 22.3 26.4H9.7Q8.3 26.4 8.3 25Z" fill="#e05353"/><g fill="#fff"><rect x="11.5" y="14.8" width="1.8" height="8.7" rx=".9"/><rect x="15.3" y="14.8" width="1.8" height="8.7" rx=".9"/><rect x="18.8" y="14.8" width="1.8" height="8.7" rx=".9"/></g></g></svg></div>
<div class="abs td" style="left:342px;top:636px;width:73px;height:46px;line-height:46px;text-align:center;font-size:17px;color:#2a2a2a;white-space:nowrap"><span style="font-size:18px;position:relative;top:-2px">125</span></div>
<div class="abs td" style="left:427px;top:636px;height:46px;line-height:46px;font-size:17px;color:#2a2a2a;white-space:nowrap">建表<span style="font-size:18px;position:relative;top:-2px">122</span></div>
<div class="abs td" style="left:579px;top:636px;height:46px;line-height:46px;font-size:17px;color:#2a2a2a;white-space:nowrap">萨达所大所大所多<span style="font-size:18px;position:relative;top:-2px">222</span></div>
<div class="abs td" style="left:882px;top:636px;height:46px;line-height:46px;font-size:17px;color:#2a2a2a;white-space:nowrap"><span style="font-size:18px;position:relative;top:-2px">sm_md01</span></div>
<div class="abs td" style="left:1062px;top:636px;height:46px;line-height:46px;font-size:17px;color:#2a2a2a;white-space:nowrap"><span style="font-size:18px;position:relative;top:-2px">md01</span></div>
<div class="abs td" style="left:1242px;top:636px;height:46px;line-height:46px;font-size:17px;color:#2a2a2a;white-space:nowrap">自定义模型</div>
<div class="abs td" style="left:1422px;top:636px;height:46px;line-height:46px;font-size:17px;color:#2a2a2a;white-space:nowrap"><span style="font-size:18px;position:relative;top:-2px">2023-06-08 17:46:14</span></div>
<div class="ib" style="left:1633px;top:642px"><svg width="32" height="32" viewBox="0 0 32 32"><rect x="7.2" y="9.2" width="13.6" height="16.7" rx="1.5" fill="#3f7ff6"/><rect x="9.2" y="7.2" width="14.5" height="17.5" rx="1" fill="#b3cdfb"/><path d="M12 7.2H18.8L23.7 12V21.8Q23.7 23 22.5 23H11V8.2Q11 7.2 12 7.2Z" fill="#3f7ff6"/><path d="M18.8 7.2H22.7Q23.7 7.2 23.7 8.2V12H19.8Q18.8 12 18.8 11Z" fill="#c9dbfc"/><path d="M20.2 8L22.9 10.6H21.2Q20.2 10.6 20.2 9.6Z" fill="#6f9ff8"/><path d="M12.9 15.5H17.9V14L21.8 16.6L17.9 19.2V18H12.9Z" fill="#fff" stroke="#fff" stroke-width=".4" stroke-linejoin="round"/></svg></div>
<div class="ib" style="left:1679px;top:642px"><svg width="32" height="32" viewBox="0 0 32 32"><path d="M10.2 8.2H22.9Q25.9 8.2 25.9 11.2V13.3Q25.9 14 25.2 14H24.4Q23.6 13 22.6 13H9.5V21Q9.5 22.1 10.6 22.1H13.8Q15 22.1 15 23.35Q15 24.6 13.8 24.6H10.2Q7.2 24.6 7.2 21.6V11.2Q7.2 8.2 10.2 8.2Z" fill="#3f7ff6"/><path d="M19.2 24.2L22.6 20.6" stroke="#3f7ff6" stroke-width="2.6" stroke-linecap="round"/><path d="M24.8 17.8L25.4 17.2" stroke="#3f7ff6" stroke-width="1.9" stroke-linecap="round"/></svg></div>
<div class="ib" style="left:1724px;top:642px"><svg width="32" height="32" viewBox="0 0 32 32"><g transform="translate(0.3 0.4)"><path d="M12.6 10.6A3.6 3.6 0 0 1 19.8 10.6H17.9A1.7 1.7 0 0 0 14.5 10.6Z" fill="#e05353"/><rect x="5.6" y="10.2" width="21" height="2.5" rx="1.25" fill="#e05353"/><path d="M8 12.5H24L23.7 25Q23.7 26.4 22.3 26.4H9.7Q8.3 26.4 8.3 25Z" fill="#e05353"/><g fill="#fff"><rect x="11.5" y="14.8" width="1.8" height="8.7" rx=".9"/><rect x="15.3" y="14.8" width="1.8" height="8.7" rx=".9"/><rect x="18.8" y="14.8" width="1.8" height="8.7" rx=".9"/></g></g></svg></div>
<div class="ib" style="left:1770px;top:642px"><svg width="32" height="32" viewBox="0 0 32 32"><g transform="translate(0.3 0.4)" fill="#3f7ff6" stroke="#3f7ff6" stroke-width="1.6" stroke-linejoin="round"><path d="M16.1 7.5L8.9 10.9L16.1 14.1L23.5 10.9Z"/><path d="M7.6 14.4L14.1 17.7V24.7L7.6 21.2Z"/><path d="M24.6 14.4L18.1 17.7V24.7L24.6 21.2Z"/></g></svg></div>
<div class="ib" style="left:1815px;top:642px"><svg width="32" height="32" viewBox="0 0 32 32"><path d="M9.7 7.3H24.3Q25.8 7.3 25.8 8.8V12.5L12.2 26.1H9.7Q8.2 26.1 8.2 24.6V8.8Q8.2 7.3 9.7 7.3Z" fill="#3f7ff6"/><path d="M24.7 15.6L27.1 18L18.6 26.5L14.5 27L15.8 24.5Z" fill="#3f7ff6" stroke="#3f7ff6" stroke-width=".7" stroke-linejoin="round"/><g fill="#a9c5fb"><rect x="11" y="9.9" width="10.9" height="1.5"/><rect x="11" y="12.6" width="8.8" height="1.3"/><rect x="11" y="14.4" width="5.1" height="1.5"/></g></svg></div>
<div class="abs td" style="left:342px;top:683px;width:73px;height:46px;line-height:46px;text-align:center;font-size:17px;color:#2a2a2a;white-space:nowrap"><span style="font-size:18px;position:relative;top:-2px">124</span></div>
<div class="abs td" style="left:427px;top:683px;height:46px;line-height:46px;font-size:17px;color:#2a2a2a;white-space:nowrap">流程测试<span style="font-size:18px;position:relative;top:-2px">-</span>勿删</div>
<div class="abs td" style="left:579px;top:683px;height:46px;line-height:46px;font-size:17px;color:#2a2a2a;white-space:nowrap">流程测试<span style="font-size:18px;position:relative;top:-2px">-</span>勿删</div>
<div class="abs td" style="left:882px;top:683px;height:46px;line-height:46px;font-size:17px;color:#2a2a2a;white-space:nowrap"><span style="font-size:18px;position:relative;top:-2px">sm_md525</span></div>
<div class="abs td" style="left:1062px;top:683px;height:46px;line-height:46px;font-size:17px;color:#2a2a2a;white-space:nowrap"><span style="font-size:18px;position:relative;top:-2px">md525</span></div>
<div class="abs td" style="left:1242px;top:683px;height:46px;line-height:46px;font-size:17px;color:#2a2a2a;white-space:nowrap">自定义模型</div>
<div class="abs td" style="left:1422px;top:683px;height:46px;line-height:46px;font-size:17px;color:#2a2a2a;white-space:nowrap"><span style="font-size:18px;position:relative;top:-2px">2023-05-25 16:35:14</span></div>
<div class="ib" style="left:1633px;top:689px"><svg width="32" height="32" viewBox="0 0 32 32"><rect x="7.2" y="9.2" width="13.6" height="16.7" rx="1.5" fill="#3f7ff6"/><rect x="9.2" y="7.2" width="14.5" height="17.5" rx="1" fill="#b3cdfb"/><path d="M12 7.2H18.8L23.7 12V21.8Q23.7 23 22.5 23H11V8.2Q11 7.2 12 7.2Z" fill="#3f7ff6"/><path d="M18.8 7.2H22.7Q23.7 7.2 23.7 8.2V12H19.8Q18.8 12 18.8 11Z" fill="#c9dbfc"/><path d="M20.2 8L22.9 10.6H21.2Q20.2 10.6 20.2 9.6Z" fill="#6f9ff8"/><path d="M12.9 15.5H17.9V14L21.8 16.6L17.9 19.2V18H12.9Z" fill="#fff" stroke="#fff" stroke-width=".4" stroke-linejoin="round"/></svg></div>
<div class="ib" style="left:1679px;top:689px"><svg width="32" height="32" viewBox="0 0 32 32"><path d="M10.2 8.2H22.9Q25.9 8.2 25.9 11.2V13.3Q25.9 14 25.2 14H24.4Q23.6 13 22.6 13H9.5V21Q9.5 22.1 10.6 22.1H13.8Q15 22.1 15 23.35Q15 24.6 13.8 24.6H10.2Q7.2 24.6 7.2 21.6V11.2Q7.2 8.2 10.2 8.2Z" fill="#3f7ff6"/><path d="M19.2 24.2L22.6 20.6" stroke="#3f7ff6" stroke-width="2.6" stroke-linecap="round"/><path d="M24.8 17.8L25.4 17.2" stroke="#3f7ff6" stroke-width="1.9" stroke-linecap="round"/></svg></div>
<div class="ib" style="left:1724px;top:689px"><svg width="32" height="32" viewBox="0 0 32 32"><g transform="translate(0.3 0.4)"><path d="M12.6 10.6A3.6 3.6 0 0 1 19.8 10.6H17.9A1.7 1.7 0 0 0 14.5 10.6Z" fill="#e05353"/><rect x="5.6" y="10.2" width="21" height="2.5" rx="1.25" fill="#e05353"/><path d="M8 12.5H24L23.7 25Q23.7 26.4 22.3 26.4H9.7Q8.3 26.4 8.3 25Z" fill="#e05353"/><g fill="#fff"><rect x="11.5" y="14.8" width="1.8" height="8.7" rx=".9"/><rect x="15.3" y="14.8" width="1.8" height="8.7" rx=".9"/><rect x="18.8" y="14.8" width="1.8" height="8.7" rx=".9"/></g></g></svg></div>
<div class="ib" style="left:1770px;top:689px"><svg width="32" height="32" viewBox="0 0 32 32"><g transform="translate(0.3 0.4)" fill="#3f7ff6" stroke="#3f7ff6" stroke-width="1.6" stroke-linejoin="round"><path d="M16.1 7.5L8.9 10.9L16.1 14.1L23.5 10.9Z"/><path d="M7.6 14.4L14.1 17.7V24.7L7.6 21.2Z"/><path d="M24.6 14.4L18.1 17.7V24.7L24.6 21.2Z"/></g></svg></div>
<div class="ib" style="left:1815px;top:689px"><svg width="32" height="32" viewBox="0 0 32 32"><path d="M9.7 7.3H24.3Q25.8 7.3 25.8 8.8V12.5L12.2 26.1H9.7Q8.2 26.1 8.2 24.6V8.8Q8.2 7.3 9.7 7.3Z" fill="#3f7ff6"/><path d="M24.7 15.6L27.1 18L18.6 26.5L14.5 27L15.8 24.5Z" fill="#3f7ff6" stroke="#3f7ff6" stroke-width=".7" stroke-linejoin="round"/><g fill="#a9c5fb"><rect x="11" y="9.9" width="10.9" height="1.5"/><rect x="11" y="12.6" width="8.8" height="1.3"/><rect x="11" y="14.4" width="5.1" height="1.5"/></g></svg></div>
<div class="abs td" style="left:342px;top:730px;width:73px;height:46px;line-height:46px;text-align:center;font-size:17px;color:#2a2a2a;white-space:nowrap"><span style="font-size:18px;position:relative;top:-2px">1</span></div>
<div class="abs td" style="left:427px;top:730px;height:46px;line-height:46px;font-size:17px;color:#2a2a2a;white-space:nowrap">默认模型</div>
<div class="abs td" style="left:579px;top:730px;height:46px;line-height:46px;font-size:17px;color:#2a2a2a;white-space:nowrap">原文章内容附加表</div>
<div class="abs td" style="left:882px;top:730px;height:46px;line-height:46px;font-size:17px;color:#2a2a2a;white-space:nowrap"><span style="font-size:18px;position:relative;top:-2px">sm_acvadditional</span></div>
<div class="abs td" style="left:1062px;top:730px;height:46px;line-height:46px;font-size:17px;color:#2a2a2a;white-space:nowrap"><span style="font-size:18px;position:relative;top:-2px">aa</span></div>
<div class="abs td" style="left:1242px;top:730px;height:46px;line-height:46px;font-size:17px;color:#2a2a2a;white-space:nowrap">自定义模型</div>
<div class="abs td" style="left:1422px;top:730px;height:46px;line-height:46px;font-size:17px;color:#2a2a2a;white-space:nowrap"><span style="font-size:18px;position:relative;top:-2px">2023-04-04 10:18:05</span></div>
<div class="pg" style="left:939px;width:66px">首页</div>
<div class="pg" style="left:1017px;width:66px">上一页</div>
<div class="pg" style="left:1137px;width:66px">下一页</div>
<div class="pg" style="left:1215px;width:66px">尾页</div>
<div class="pg" style="left:1095px;width:30px;background:#0b74fe;border-color:#0b74fe;color:#fff"></div>
<svg class="abs" style="left:0;top:0;overflow:visible" width="1" height="1"><path d="M1107.3 812.3L1111.1 809.2V820.2" fill="none" stroke="#fff" stroke-width="2"/></svg>
<div class="red" style="left:32px;top:229px;width:213px;height:62px"></div>
<svg class="abs" style="left:0;top:0;overflow:visible" width="1" height="1"><path d="M189.6 265L196.6 260.7V283.9" fill="none" stroke="#fe1d10" stroke-width="2.6" stroke-linejoin="miter"/></svg>
<div class="red" style="left:326px;top:221px;width:153px;height:72px"></div>
<svg class="abs" style="left:430px;top:248px;overflow:visible" width="30" height="37"><path d="M8 10.4Q10.4 7.4 14.3 7.4Q19.6 7.6 19.6 12.8Q19.6 16.3 14.5 20Q8.3 24.4 8.3 29.5H22" fill="none" stroke="#fe1d10" stroke-width="2.8"/></svg>
<!--/MAIN-->
</body></html>
